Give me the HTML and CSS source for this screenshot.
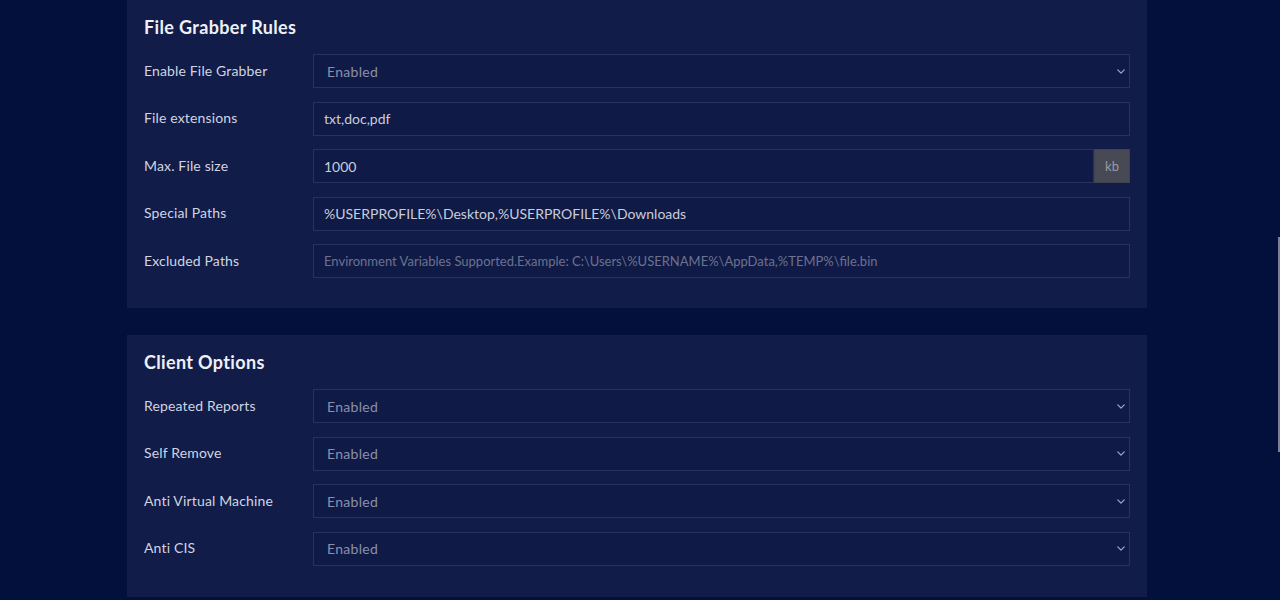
FILE: index.html
```html
<!DOCTYPE html>
<html lang="en">
<head>
<meta charset="utf-8">
<title>Builder Settings</title>
<link rel="stylesheet" href="styles.css">
</head>
<body>
<main class="page">
  <section class="card">
    <h2 class="card-title">File Grabber Rules</h2>
    <div class="rows">
      <div class="row">
        <label class="row-label">Enable File Grabber</label>
        <div class="select"><span>Enabled</span><svg class="chev" viewBox="0 0 10 6"><path d="M1 1l4 4 4-4"/></svg></div>
      </div>
      <div class="row">
        <label class="row-label">File extensions</label>
        <div class="input value">txt,doc,pdf</div>
      </div>
      <div class="row">
        <label class="row-label">Max. File size</label>
        <div class="group">
          <div class="input value">1000</div>
          <div class="addon">kb</div>
        </div>
      </div>
      <div class="row">
        <label class="row-label">Special Paths</label>
        <div class="input value">%USERPROFILE%\Desktop,%USERPROFILE%\Downloads</div>
      </div>
      <div class="row">
        <label class="row-label">Excluded Paths</label>
        <div class="input placeholder">Environment Variables Supported.Example: C:\Users\%USERNAME%\AppData,%TEMP%\file.bin</div>
      </div>
    </div>
  </section>

  <section class="card">
    <h2 class="card-title">Client Options</h2>
    <div class="rows">
      <div class="row">
        <label class="row-label">Repeated Reports</label>
        <div class="select"><span>Enabled</span><svg class="chev" viewBox="0 0 10 6"><path d="M1 1l4 4 4-4"/></svg></div>
      </div>
      <div class="row">
        <label class="row-label">Self Remove</label>
        <div class="select"><span>Enabled</span><svg class="chev" viewBox="0 0 10 6"><path d="M1 1l4 4 4-4"/></svg></div>
      </div>
      <div class="row">
        <label class="row-label">Anti Virtual Machine</label>
        <div class="select"><span>Enabled</span><svg class="chev" viewBox="0 0 10 6"><path d="M1 1l4 4 4-4"/></svg></div>
      </div>
      <div class="row">
        <label class="row-label">Anti CIS</label>
        <div class="select"><span>Enabled</span><svg class="chev" viewBox="0 0 10 6"><path d="M1 1l4 4 4-4"/></svg></div>
      </div>
    </div>
  </section>
</main>
<div class="scroll-thumb"></div>
</body>
</html>
```

FILE: styles.css
```css
html, body {
  margin: 0;
  height: 100%;
  overflow: hidden;
}

body {
  background: #03103b;
  font-family: "Lato", "Noto Sans", sans-serif;
  color: #d3d7e3;
}

.page {
  width: 1020px;
  margin-left: 127px;
  display: flex;
  flex-direction: column;
  gap: 27px;
}

.card {
  background: #111c48;
  padding: 14px 17px 30px 17px;
}

.card + .card {
  padding-bottom: 31px;
}

.card-title {
  margin: 0 0 14px 0;
  font-size: 18px;
  line-height: 26px;
  font-weight: 700;
  letter-spacing: 0.35px;
  color: #eef0f6;
}

.rows {
  display: flex;
  flex-direction: column;
  gap: 13.5px;
}

.row {
  display: flex;
  align-items: center;
  height: 34px;
}

.row-label {
  width: 169px;
  flex: none;
  font-size: 14px;
  letter-spacing: 0.15px;
  color: #d0d4e1;
  padding-bottom: 2px;
}

.select,
.input {
  flex: 1;
  height: 34px;
  box-sizing: border-box;
  border: 1px solid #28325f;
  background: #101a46;
  display: flex;
  align-items: center;
  font-size: 14px;
}

.select {
  padding: 0 4px 0 13px;
  justify-content: space-between;
  color: #8a90aa;
  letter-spacing: 0.3px;
}

.chev {
  width: 8px;
  height: 5px;
  fill: none;
  stroke: #a0a6c2;
  stroke-width: 1.6;
  stroke-linecap: round;
  stroke-linejoin: round;
}

.input {
  padding: 0 10px;
  white-space: nowrap;
  overflow: hidden;
}

.value {
  color: #c9cdda;
}

.placeholder {
  color: #6b7290;
  font-size: 13px;
}

.group {
  flex: 1;
  display: flex;
  height: 34px;
}

.addon {
  width: 36px;
  flex: none;
  box-sizing: border-box;
  background: #474a54;
  border: 1px solid #3d4150;
  color: #989ba6;
  font-size: 13px;
  display: flex;
  align-items: center;
  justify-content: center;
}

.scroll-thumb {
  position: absolute;
  right: 0;
  top: 237px;
  width: 2px;
  height: 215px;
  background: #7b8099;
}
```
